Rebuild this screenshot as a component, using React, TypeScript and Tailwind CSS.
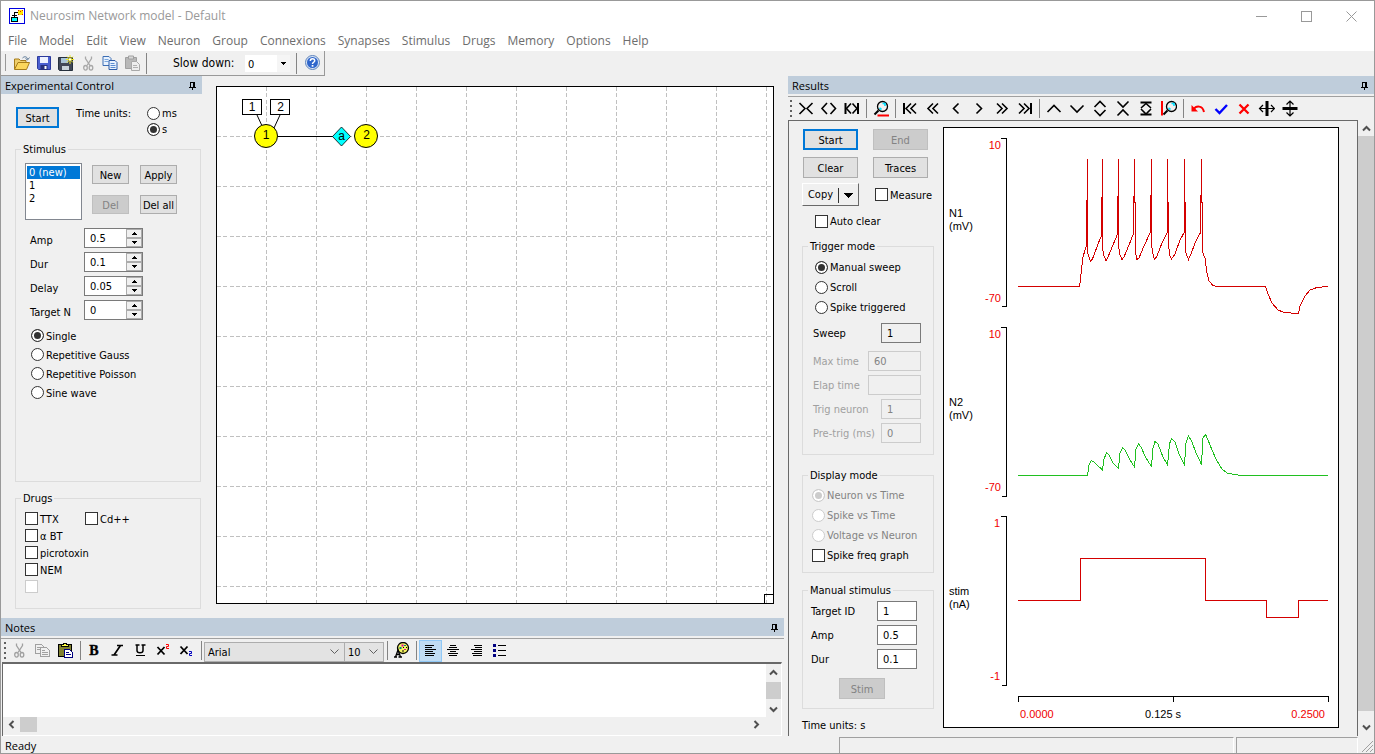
import type { ReactNode } from "react";

const ui = "font-['DejaVu_Sans_Condensed',Tahoma,sans-serif]";

/* ---------- small controls ---------- */

function Radio({ name, label, on, disabled }: { name: string; label: string; on?: boolean; disabled?: boolean }) {
  return (
    <label className={disabled ? "flex items-center gap-[2px] text-[#838383]" : "flex items-center gap-[2px]"}>
      <input
        type="radio"
        name={name}
        defaultChecked={on}
        disabled={disabled}
        className="size-[13px] shrink-0 appearance-none rounded-full border border-[#333] bg-white shadow-[inset_0_0_0_2px_white] checked:bg-[#333] disabled:border-[#ccc] disabled:checked:bg-[#ccc]"
      />
      <span className="pt-[2px] leading-[12px] whitespace-nowrap">{label}</span>
    </label>
  );
}

function Check({ label, disabled }: { label: string; disabled?: boolean }) {
  return (
    <label className="flex items-center gap-[2px]">
      <input
        type="checkbox"
        disabled={disabled}
        aria-label={label || "Unassigned drug"}
        className="size-[13px] shrink-0 appearance-none border border-[#333] bg-white checked:bg-[#333] disabled:border-[#ccc]"
      />
      <span className="pt-[2px] leading-[12px] whitespace-nowrap">{label}</span>
    </label>
  );
}

function Btn({ children, primary, disabled }: { children: ReactNode; primary?: boolean; disabled?: boolean }) {
  const look = primary
    ? "border-2 border-[#0078d7] bg-[#e1e1e1]"
    : disabled
      ? "border border-[#bfbfbf] bg-[#ccc] text-[#838383]"
      : "border border-[#adadad] bg-[#e1e1e1]";
  return (
    <button type="button" disabled={disabled} className={`flex h-full w-full items-center justify-center pt-[2px] leading-[12px] whitespace-nowrap ${look}`}>
      {children}
    </button>
  );
}

function Group({ title, className, children }: { title: string; className?: string; children: ReactNode }) {
  return (
    <fieldset className={`min-w-0 border border-[#dcdcdc] ${className ?? ""}`}>
      <legend className="ml-[5px] h-[14px] px-[2px] leading-[16px]">{title}</legend>
      {children}
    </fieldset>
  );
}

function Spin({ id, label, value }: { id: string; label: string; value: string }) {
  return (
    <div className="flex h-5">
      <label htmlFor={id} className="w-[54px] pt-[6px] leading-[14px]">{label}</label>
      <div className="flex w-[59px] border border-[#7a7a7a] bg-white">
        <input id={id} defaultValue={value} className="w-[41px] min-w-0 bg-transparent pt-[2px] pl-[5px] outline-none" />
        <div className="flex flex-1 flex-col bg-[#f0f0f0]">
          <button type="button" aria-label={`${label} up`} className="flex flex-1 items-center justify-center border border-[#acacac]">
            <svg width="5" height="3" shapeRendering="crispEdges"><path d="M2 0h1v1h1v1h1v1H0V2h1V1h1z" /></svg>
          </button>
          <button type="button" aria-label={`${label} down`} className="flex flex-1 items-center justify-center border border-[#acacac]">
            <svg width="5" height="3" shapeRendering="crispEdges"><path d="M0 0h5v1H4v1H3v1H2V2H1V1H0z" /></svg>
          </button>
        </div>
      </div>
    </div>
  );
}

function Field({ id, label, value, disabled, readOnly, wide }: { id: string; label: string; value: string; disabled?: boolean; readOnly?: boolean; wide?: boolean }) {
  const box = disabled ? "border-[#ccc] bg-[#f0f0f0] text-[#838383]" : readOnly ? "border-[#7a7a7a] bg-[#f0f0f0]" : "border-[#7a7a7a] bg-white";
  return (
    <div className="flex h-5 items-center justify-between">
      <label htmlFor={id} className={disabled ? "pt-[2px] leading-[14px] whitespace-nowrap text-[#a0a0a0]" : "pt-[2px] leading-[14px] whitespace-nowrap"}>{label}</label>
      <input
        id={id}
        defaultValue={value}
        disabled={disabled}
        readOnly={readOnly}
        className={`h-5 border pt-px pl-[5px] outline-none ${wide ? "w-[53px]" : "w-[40px]"} ${box}`}
      />
    </div>
  );
}

/* ---------- tool bars ---------- */

function Tool({ label, children, active }: { label: string; children: ReactNode; active?: boolean }) {
  return (
    <button
      type="button"
      aria-label={label}
      className={active ? "flex h-[22px] w-[23px] items-center justify-center border border-[#90c8f6] bg-[#c0dcf3]" : "flex h-[22px] w-[23px] items-center justify-center"}
    >
      <svg width="17" height="17" viewBox="0 0 17 17" fill="none" stroke="black" strokeWidth="1.6" className="shrink-0">{children}</svg>
    </button>
  );
}

function Sep() {
  return (
    <div className="flex w-[6px] justify-center self-stretch py-[2px]">
      <div className="w-px bg-[#848484]" />
    </div>
  );
}

function Grip() {
  return (
    <svg width="6" height="20" shapeRendering="crispEdges" className="shrink-0">
      <path d="M2 1h2v2H2zM2 6h2v2H2zM2 11h2v2H2zM2 16h2v2H2z" fill="#606060" />
    </svg>
  );
}

function Pin() {
  return (
    <svg width="7" height="8" viewBox="0 0 7 8" shapeRendering="crispEdges" aria-hidden="true">
      <path d="M1 0h5v5h1v1H4v2H3V6H0V5h1zM2 1v4h2V1z" fillRule="evenodd" />
    </svg>
  );
}

function PaneHeader({ title }: { title: string }) {
  return (
    <h2 className="flex h-[18px] items-center justify-between bg-[#bfcddb] pt-[2px] pr-[6px] pl-[4px] font-['Open_Sans',sans-serif] text-[11px] leading-[16px]">
      {title}
      <Pin />
    </h2>
  );
}

function Scissors({ color }: { color: string }) {
  return (
    <g stroke={color} strokeWidth="1.3" fill="none">
      <path d="M5.5 1.5v2l4.5 7M11.5 1.5v2l-4.5 7" />
      <ellipse cx="5.5" cy="12.8" rx="1.8" ry="2.3" />
      <ellipse cx="11" cy="12.8" rx="1.8" ry="2.3" />
    </g>
  );
}

function Chev({ d, label }: { d: string; label: string }) {
  return (
    <button type="button" aria-label={label} className="flex size-4 items-center justify-center">
      <svg width="9" height="9" viewBox="0 0 9 9" fill="none" stroke="#505050" strokeWidth="2"><path d={d} /></svg>
    </button>
  );
}

const UP = "M1 6.5 4.5 3 8 6.5";
const DOWN = "M1 2.5 4.5 6 8 2.5";
const LEFT = "M6.5 1 3 4.5 6.5 8";
const RIGHT = "M2.5 1 6 4.5 2.5 8";

/* ---------- window chrome ---------- */

function TitleBar() {
  return (
    <header className="flex h-[30px] items-center bg-white pl-[8px] text-[#999]">
      <svg width="16" height="16" viewBox="0 0 16 16" shapeRendering="crispEdges">
        <rect x=".5" y=".5" width="15" height="15" fill="white" stroke="#0000e0" />
        <path d="M9 2h5v5H9z" fill="#ffe800" />
        <path d="M9 2h1v1H9zM13 2h1v1h-1zM9 6h1v1H9zM13 6h1v1h-1zM11 3h1v1h-1z" fill="#e02000" />
        <path d="M9 4.500H5.500v4M3 7.500h5" stroke="black" fill="none" />
        <path d="M2 9h7v5H2z" fill="black" />
        <path d="M3 10h5v3H3z" fill="#00ffff" />
      </svg>
      <h1 className="flex-1 pl-[5px] text-[12px]">Neurosim Network model - Default</h1>
      <div className="flex text-[#999]">
        <button type="button" aria-label="Minimize" className="flex h-[30px] w-[45px] items-center justify-center">
          <svg width="11" height="11" shapeRendering="crispEdges"><path d="M0 5.5h11" stroke="#999" /></svg>
        </button>
        <button type="button" aria-label="Maximize" className="flex h-[30px] w-[45px] items-center justify-center">
          <svg width="11" height="11" shapeRendering="crispEdges"><path d="M.5.5h10v10H.5z" fill="none" stroke="#999" /></svg>
        </button>
        <button type="button" aria-label="Close" className="flex h-[30px] w-[45px] items-center justify-center">
          <svg width="11" height="11"><path d="M.5.5l10 10M10.5.5l-10 10" stroke="#999" /></svg>
        </button>
      </div>
    </header>
  );
}

const menus = ["File", "Model", "Edit", "View", "Neuron", "Group", "Connexions", "Synapses", "Stimulus", "Drugs", "Memory", "Options", "Help"];

function MenuBar() {
  return (
    <nav className="flex h-[20px] items-center gap-[12px] bg-white pl-[7px] text-[12px] text-[#6d6d6d]">
      {menus.map((m) => (
        <button key={m} type="button">{m}</button>
      ))}
    </nav>
  );
}

function FileTool({ label, children }: { label: string; children: ReactNode }) {
  return (
    <button type="button" aria-label={label} className="flex w-[22px] items-center justify-center">
      <svg width="16" height="16" viewBox="0 0 16 16">{children}</svg>
    </button>
  );
}

function MainToolBar() {
  return (
    <div className={`flex h-[25px] w-[324px] items-stretch border-r border-b border-[#999] pb-px ${ui} text-[12px]`}>
      <div className="my-[3px] ml-[4px] w-px bg-[#999]" />
      <div className="ml-[5px] flex">
        <FileTool label="Open">
          <path d="M.5 14V4h4.500l1.500 1.500H12V8" fill="#f0cf6c" stroke="#a67c1b" />
          <path d="M.5 14.500 4 7.500h11.500L12.500 14.500z" fill="#fbd65c" stroke="#a67c1b" />
          <path d="M8.500 3c2-2 4.500-1.500 5 1M15.500 2.500 13.500 5 11.500 3.500" fill="none" stroke="#5b7796" />
        </FileTool>
        <FileTool label="Save">
          <path d="M1.500 1.500h13v13h-12l-1-1z" fill="#4a5fd0" stroke="#2c3a9c" />
          <path d="M4 2h8v6H4z" fill="#eef2ff" />
          <path d="M4.500 10h7v5h-7z" fill="#27307c" />
          <path d="M8.500 11h2v3h-2z" fill="white" />
        </FileTool>
        <FileTool label="Save as">
          <path d="M.5 2.500h14v13h-13l-1-1z" fill="#404858" stroke="#26303c" />
          <path d="M3 3h7v5H3z" fill="#a8c4d8" />
          <path d="M4 11h7v4H4z" fill="#c8d4dc" />
          <path d="M12 0v9M8 4.500h8M9 1.500l6 6M15 1.500l-6 6" stroke="#f2ea20" />
          <path d="M11 3.500h2v2h-2z" fill="white" />
        </FileTool>
        <FileTool label="Cut"><Scissors color="#a8a8a8" /></FileTool>
        <FileTool label="Copy">
          <path d="M1 1.500h6l2 2v7H1z" fill="#e8f2ff" stroke="#3c6eb4" />
          <path d="M2.500 4.500h4M2.500 6.500h4" stroke="#7aa6dc" />
          <path d="M7 5.500h6l2 2v7H7z" fill="#e8f2ff" stroke="#2d5ca8" />
          <path d="M8.500 8.500h4M8.500 10.500h5M8.500 12.500h5" stroke="#5b8cd0" />
        </FileTool>
        <FileTool label="Paste">
          <path d="M1.500 2.500h11v11h-11z" fill="#b8b8b8" stroke="#a0a0a0" />
          <path d="M4.500 1h5v3h-5z" fill="#d8d8d8" stroke="#a0a0a0" />
          <path d="M7.500 6.500h5l3 3v6h-8z" fill="#ededed" stroke="#a8a8a8" />
          <path d="M9 10.500h4M9 12.500h5" stroke="#b0b0b0" />
        </FileTool>
      </div>
      <div className="mt-[2px] ml-[3px] w-px bg-[#848484]" />
      <label htmlFor="slow" className="ml-[26px] self-center pt-px">Slow down:</label>
      <div className="mt-[4px] ml-auto flex h-[17px] w-[45px] items-center bg-white">
        <select id="slow" defaultValue="0" className="h-full flex-1 appearance-none bg-transparent pt-[2px] pl-[3px] text-[11px] outline-none">
          <option>0</option>
        </select>
        <div className="flex h-full w-[13px] items-center justify-center bg-[#f5f5f5]">
          <svg width="5" height="3" shapeRendering="crispEdges"><path d="M0 0h5v1H4v1H3v1H2V2H1V1H0z" /></svg>
        </div>
      </div>
      <div className="mt-[2px] ml-[6px] w-px bg-[#848484]" />
      <button type="button" aria-label="Help" className="mr-[4px] ml-[8px] flex items-center">
        <svg width="15" height="15" viewBox="0 0 15 15">
          <circle cx="7.500" cy="7.500" r="7" fill="#d8e4f4" stroke="#5f84bc" />
          <circle cx="7.500" cy="7.500" r="5.500" fill="#2f66cc" />
          <path d="M5.300 6C5.300 3 9.700 3 9.700 5.700 9.700 7.300 7.500 7.200 7.500 9" stroke="white" strokeWidth="1.500" fill="none" />
          <path d="M6.700 10h1.700v1.700H6.700z" fill="white" />
        </svg>
      </button>
    </div>
  );
}

/* ---------- experimental control ---------- */

function ExperimentalControl() {
  return (
    <aside className="flex w-[201px] shrink-0 flex-col">
      <PaneHeader title="Experimental Control" />
      <div className="flex flex-1 flex-col pt-[11px] pr-px pl-[14px]">
        <div className="flex h-8 items-start pl-px">
          <div className="mt-[2px] h-[21px] w-[43px]"><Btn primary>Start</Btn></div>
          <span className="w-[71px] pl-[17px] leading-[18px] whitespace-nowrap">Time units:</span>
          <div className="grid flex-1 auto-rows-[16px] pl-[17px]">
            <Radio name="units" label="ms" />
            <Radio name="units" label="s" on />
          </div>
        </div>
        <Group title="Stimulus" className="mt-[5px] flex-1">
          <div className="flex gap-[10px] pt-[7px] pl-[9px]">
            <select aria-label="Stimulus list" size={4} defaultValue="0" className="h-[57px] w-[57px] appearance-none overflow-hidden border border-[#828790] bg-white px-px pt-[2px] pb-0 leading-[13px] outline-none">
              <option value="0" className="min-h-0 px-[2px] py-0 leading-[13px] checked:bg-[linear-gradient(#0078d7,#0078d7)] checked:text-white">0 (new)</option>
              <option value="1" className="min-h-0 px-[2px] py-0 leading-[13px]">1</option>
              <option value="2" className="min-h-0 px-[2px] py-0 leading-[13px]">2</option>
            </select>
            <div className="grid grid-cols-[37px_37px] grid-rows-[19px_19px] gap-[11px] pt-[2px]">
              <Btn>New</Btn>
              <Btn>Apply</Btn>
              <Btn disabled>Del</Btn>
              <Btn>Del all</Btn>
            </div>
          </div>
          <div className="mt-2 flex flex-col gap-1 pl-[14px]">
            <Spin id="amp" label="Amp" value="0.5" />
            <Spin id="dur" label="Dur" value="0.1" />
            <Spin id="delay" label="Delay" value="0.05" />
            <Spin id="target" label="Target N" value="0" />
          </div>
          <div className="mt-[6px] grid auto-rows-[19px] pl-[15px]">
            <Radio name="kind" label="Single" on />
            <Radio name="kind" label="Repetitive Gauss" />
            <Radio name="kind" label="Repetitive Poisson" />
            <Radio name="kind" label="Sine wave" />
          </div>
        </Group>
        <Group title="Drugs" className="mt-[9px] mb-[9px] h-[118px]">
          <div className="grid auto-rows-[17px] grid-cols-[60px_1fr] pt-[5px] pl-[9px]">
            <Check label="TTX" />
            <Check label="Cd++" />
            <div className="col-span-2 grid"><Check label="α BT" /></div>
            <div className="col-span-2 grid"><Check label="picrotoxin" /></div>
            <div className="col-span-2 grid"><Check label="NEM" /></div>
            <div className="col-span-2 grid"><Check label="" disabled /></div>
          </div>
        </Group>
      </div>
    </aside>
  );
}

/* ---------- network canvas ---------- */

function NetworkCanvas() {
  return (
    <div className="flex flex-1 pt-[10px] pr-[14px] pb-[14px] pl-[14px]">
      <div className="relative flex-1 border border-black bg-white">
        <svg className="absolute inset-0 size-full" fontFamily="'Liberation Sans', Arial, sans-serif" fontSize="12" textAnchor="middle">
          <defs>
            <pattern id="grid" width="50" height="50" patternUnits="userSpaceOnUse">
              <path d="M49.500 0v50M0 49.500h50" stroke="#c0c0c0" strokeDasharray="4 2.250" fill="none" shapeRendering="crispEdges" />
            </pattern>
          </defs>
          <rect width="100%" height="100%" fill="url(#grid)" />
          <path d="M40 28l6 13M63 28l-6 13" stroke="black" />
          <path d="M61 49.500h56" stroke="black" shapeRendering="crispEdges" />
          <path d="M25.500 12.500h19v15h-19zM53.500 12.500h19v15h-19z" fill="white" stroke="black" shapeRendering="crispEdges" />
          <text x="35" y="24">1</text>
          <text x="63.500" y="24">2</text>
          <circle cx="49" cy="49" r="11.500" fill="#ffff00" stroke="black" />
          <circle cx="149" cy="49" r="11.500" fill="#ffff00" stroke="black" />
          <path d="M124.500 40l9 9.500-9 9.500-9-9.500z" fill="#00ffff" stroke="black" strokeWidth=".8" />
          <text x="49" y="52">1</text>
          <text x="149.500" y="52">2</text>
          <text x="124.500" y="52.500">a</text>
        </svg>
        <div className="absolute right-0 bottom-0 size-[9px] border-t border-l border-black" />
      </div>
    </div>
  );
}

/* ---------- notes ---------- */

function Combo({ label, value, className }: { label: string; value: string; className: string }) {
  return (
    <div className={`flex h-[20px] items-center self-end border border-[#adadad] bg-[#e3e3e3] pr-[5px] ${className}`}>
      <select aria-label={label} defaultValue={value} className={`min-w-0 flex-1 appearance-none bg-transparent pt-[2px] pl-[3px] outline-none ${ui}`}>
        <option>{value}</option>
      </select>
      <svg width="9" height="6" viewBox="0 0 9 6" fill="none" stroke="#606060"><path d="M.5.500l4 4 4-4" /></svg>
    </div>
  );
}

function Notes() {
  return (
    <section className="flex h-[118px] shrink-0 flex-col pr-[4px]">
      <PaneHeader title="Notes" />
      <div className="mt-[2px] flex h-[24px] items-center border-t border-[#a0a0a0] pl-px">
        <Grip />
        <Tool label="Cut"><Scissors color="#a0a0a0" /></Tool>
        <Tool label="Copy">
          <g stroke="#a0a0a0" strokeWidth="1" shapeRendering="crispEdges">
            <path d="M1.500 2.500h6l3 3v6h-9zM3 5.500h3M3 7.500h3" fill="#f0f0f0" />
            <path d="M6.500 5.500h6l3 3v6h-9zM8 8.500h3M8 10.500h6M8 12.500h6" fill="#f0f0f0" />
          </g>
        </Tool>
        <Tool label="Paste">
          <g strokeWidth="1" shapeRendering="crispEdges">
            <path d="M1.500 2.500h13v12h-13z" fill="#808030" stroke="black" />
            <path d="M4.500 4.500h7v-2h-2v-1h-3v1h-2z" fill="#ffff40" stroke="black" />
            <path d="M7.500 7.500h5l3 3v5h-8z" fill="white" stroke="#000080" />
            <path d="M9 10.500h3M9 12.500h5" stroke="#000080" />
          </g>
        </Tool>
        <Sep />
        <Tool label="Bold"><text x="8" y="13" textAnchor="middle" fontFamily="'Liberation Serif', serif" fontWeight="bold" fontSize="14" fill="black" stroke="black" strokeWidth=".4">B</text></Tool>
        <Tool label="Italic"><path d="M8 3.500h6M2.500 13h6M11.500 3.500 5 13" strokeWidth="1.700" /></Tool>
        <Tool label="Underline">
          <path d="M3.500 3h4M9.500 3h4M5 3v5.500c0 3 6 3 6 0V3" strokeWidth="1.500" />
          <path d="M4 13.500h9" strokeWidth="1" />
        </Tool>
        <Tool label="Superscript">
          <path d="M2.500 5l7 7.500M9.500 5l-7 7.500" strokeWidth="1.800" />
          <path d="M11 2.500h2.500v2H11.500v2H14" stroke="red" strokeWidth="1" />
        </Tool>
        <Tool label="Subscript">
          <path d="M2.500 4.500l7 7.500M9.500 4.500l-7 7.500" strokeWidth="1.800" />
          <path d="M11 9.500h2.500v2H11.500v2H14" stroke="#0000c0" strokeWidth="1" />
        </Tool>
        <Sep />
        <Combo label="Font" value="Arial" className="w-[141px]" />
        <Combo label="Size" value="10" className="-ml-px w-[40px]" />
        <Sep />
        <Tool label="Text colour">
          <circle cx="10" cy="6" r="5.500" fill="#f4f260" stroke="black" strokeWidth="1.300" />
          <path d="M6.500 5h2v2h-2zM11 3h2v1h-2z" fill="#008080" stroke="none" />
          <path d="M8.500 2.500h2v2h-2zM11 7h2v1h-2z" fill="#e000a0" stroke="none" />
          <path d="M13 5h1v1h-1zM10 5h1v1h-1zM9 8.500h2v1H9z" fill="black" stroke="none" />
          <path d="M1 15h3M5.500 15H9M2.500 15l2.500-7 2.500 7M3.500 12.500h3" strokeWidth="1.300" />
        </Tool>
        <Sep />
        <Tool label="Align left" active><path d="M3 3.500h9M3 5.500h7M3 7.500h11M3 9.500h8M3 11.500h10M3 13.500h9" strokeWidth="1" shapeRendering="crispEdges" /></Tool>
        <Tool label="Align centre"><path d="M5 3.500h6M4 5.500h8M2 7.500h12M5 9.500h6M3 11.500h10M4 13.500h8" strokeWidth="1" shapeRendering="crispEdges" /></Tool>
        <Tool label="Align right"><path d="M6 3.500h8M7 5.500h7M3 7.500h11M6 9.500h8M4 11.500h10M5 13.500h9" strokeWidth="1" shapeRendering="crispEdges" /></Tool>
        <Tool label="Bullets">
          <path d="M2 2h3v3H2zM2 7h3v3H2zM2 12h3v3H2z" fill="#000080" stroke="none" shapeRendering="crispEdges" />
          <path d="M7 3.500h8M7 8.500h8M7 13.500h8" strokeWidth="1" shapeRendering="crispEdges" />
        </Tool>
      </div>
      <div className="mr-[2px] ml-px flex min-h-0 flex-1 flex-col border-t-2 border-r border-l border-t-[#696969] border-r-white border-l-[#696969]">
        <div className="flex min-h-0 flex-1">
          <textarea aria-label="Notes text" className="min-w-0 flex-1 resize-none bg-white outline-none" />
          <div className="flex w-[15px] flex-col items-center justify-between">
            <Chev d={UP} label="Scroll notes up" />
            <div className="h-[17px] w-full bg-[#cdcdcd]" />
            <Chev d={DOWN} label="Scroll notes down" />
          </div>
        </div>
        <div className="flex h-[15px] items-center pr-[17px]">
          <Chev d={LEFT} label="Scroll notes left" />
          <div className="ml-px h-full w-[17px] bg-[#cdcdcd]" />
          <div className="flex-1" />
          <Chev d={RIGHT} label="Scroll notes right" />
        </div>
        <div className="h-[4px] border-b border-white" />
      </div>
    </section>
  );
}

/* ---------- results ---------- */

function ResultsToolBar() {
  return (
    <div className="mt-[2px] flex h-[24px] items-center border-t border-[#a0a0a0]">
      <Grip />
      <Tool label="Compress time"><path d="M2.500 3 8 8.500 2.500 14M15.500 3 10 8.500l5.500 5.500" /></Tool>
      <Tool label="Expand time"><path d="M7 3 2 8.500 7 14M10.500 3l5 5.500-5 5.500" /></Tool>
      <Tool label="Fit time"><path d="M2.500 3v11M15 3v11" strokeWidth="2" /><path d="M8 3.500 3.500 8.500 8 13.500M9.500 3.500l4.500 5-4.500 5" /></Tool>
      <Sep />
      <Tool label="Zoom time">
        <circle cx="10.500" cy="6.500" r="5" strokeWidth="1.300" />
        <path d="M10.500 3.500H13V6M7.500 8l2 1.500" stroke="#00e0ff" />
        <path d="M6.500 10.500l-4 4" strokeWidth="2" />
        <path d="M5.500 15.500H17" stroke="red" strokeWidth="2" />
      </Tool>
      <Sep />
      <Tool label="First"><path d="M3 3v11" strokeWidth="2" /><path d="M10 3.500l-5 5 5 5M15 3.500l-5 5 5 5" /></Tool>
      <Tool label="Page back"><path d="M9 3.500l-5 5 5 5M14 3.500l-5 5 5 5" /></Tool>
      <Tool label="Back"><path d="M11.500 3.500l-5 5 5 5" /></Tool>
      <Tool label="Forward"><path d="M6.500 3.500l5 5-5 5" /></Tool>
      <Tool label="Page forward"><path d="M4 3.500l5 5-5 5M9 3.500l5 5-5 5" /></Tool>
      <Tool label="Last"><path d="M15 3v11" strokeWidth="2" /><path d="M3 3.500l5 5-5 5M8 3.500l5 5-5 5" /></Tool>
      <Sep />
      <Tool label="Shift up"><path d="M2.500 12 9 5.500l6.500 6.500" /></Tool>
      <Tool label="Shift down"><path d="M2.500 5.500 9 12l6.500-6.500" /></Tool>
      <Tool label="Expand scale"><path d="M3.500 7 9 1.500 14.500 7M3.500 10 9 15.500l5.500-5.500" /></Tool>
      <Tool label="Compress scale"><path d="M3.500 1.500 9 7l5.500-5.500M3.500 15.500 9 10l5.500 5.500" /></Tool>
      <Tool label="Fit scale"><path d="M3.500 2.500h11M3.500 14.500h11" strokeWidth="2" /><path d="M4 8l5-4.500L14 8M4 9l5 5 5-5" /></Tool>
      <Tool label="Zoom scale">
        <circle cx="11.500" cy="6.500" r="5" strokeWidth="1.300" />
        <path d="M11.500 3.500H14V6M8.500 8l2 1.500" stroke="#00e0ff" />
        <path d="M7.500 10.500l-4 4" strokeWidth="2" />
        <path d="M2 1v14.500" stroke="red" strokeWidth="2" />
      </Tool>
      <Sep />
      <Tool label="Undo"><path d="M2.500 5v6.500H9z" fill="red" stroke="none" /><path d="M4.500 9.500C7 5.500 13.500 5 15 12" stroke="red" strokeWidth="2" /></Tool>
      <Tool label="Accept"><path d="M3.500 9l4 4L15 5" stroke="#0000ff" strokeWidth="2.400" /></Tool>
      <Tool label="Cancel"><path d="M4.500 4.500l9 9M13.500 4.500l-9 9" stroke="red" strokeWidth="2.300" /></Tool>
      <Tool label="Split horizontally"><path d="M9 1v15" strokeWidth="3" /><path d="M1.500 8.500h15M5 5 1.500 8.500 5 12M13 5l3.500 3.500L13 12" strokeWidth="1.200" /></Tool>
      <Tool label="Split vertically"><path d="M1.500 8.500h15" strokeWidth="3" /><path d="M9 1v15M5.500 4.500 9 1l3.500 3.500M5.500 12.500 9 16l3.500-3.500" strokeWidth="1.200" /></Tool>
    </div>
  );
}

const n1Trace =
  "M1018 286.500H1079.500L1080.500 280 1081.500 269 1083 257 1086.500 245V200H1087.500V159V253L1089 257 1090.500 261.500 1092.500 259 1098 244 1101.500 235.500V197H1102.500V159V248L1104 256 1106 260.500 1108 257 1113 245 1117.500 234V196H1118.500V159V246L1120 255 1122 259.500 1124 257 1129 245 1133.500 233.500V196H1134.500V202H1135.500V253L1137 259.500 1139 258 1144 246 1150.500 232V195H1151.500V159V245L1153 254 1154.500 259.500 1157 256 1162 243 1167.500 232V159V202H1168.500V246L1170 256 1171.500 259 1175 254 1180 240 1184.500 232V159V202H1185.500V252L1188.500 259.500 1191 254 1195 243 1200.500 232.500V195H1201.500V159V202H1202.500V252L1205 258 1207 273 1209 281 1213 285.500 1217 286.500H1265.500L1268 294 1272 303 1278 310 1284 312.500 1298.500 313.500 1300 306 1305 296 1310 290 1317 287.500 1328 286.500M1134.500 202V159";

const n2Trace =
  "M1018 475.500H1087.500L1089 465 1091.500 460.500 1094 462 1102.500 470 1104 459 1106.500 453 1109 455 1113 463 1118.500 468.500 1120 453 1122.500 448 1125 450 1130 460 1134.500 467 1136 449 1138.500 444 1141 447 1146 458 1151.500 466.500 1153 448 1155 441.500 1158 444 1163 457 1167.500 465 1169.500 444 1171.500 438.500 1175 442 1179 454 1184.500 464.500 1186 443 1188.500 436 1192 442 1196 453 1201.500 464.500 1203 438 1205.500 434.500 1208 440 1212 450 1217 461 1222 469 1227 473 1234 474.500 1242 475.500H1328";

function Plot() {
  return (
    <div className="min-w-0 flex-1 self-start border border-black bg-white">
      <svg viewBox="944 128 394 599" className="block w-full" fontFamily="'Liberation Sans', Arial, sans-serif" fontSize="11">
        <g fill="none" stroke="black" shapeRendering="crispEdges">
          <path d="M1001 138.500h5.500v168H1002M1001 327.500h5.500v169H1002M1001 516.500h5.500v169H1002" />
          <path d="M1018.500 702v-5.500h310v5.500M1173.500 697v5" />
        </g>
        <g fill="none" shapeRendering="crispEdges" strokeWidth="1">
          <path d={n1Trace} stroke="#d40000" />
          <path d={n2Trace} stroke="#20c020" />
          <path d="M1018 600.500h62.500v-42h125v42h61v17h32v-17H1328" stroke="#d40000" />
        </g>
        <g>
          <text x="949" y="217">N1</text>
          <text x="949" y="230">(mV)</text>
          <text x="949" y="406">N2</text>
          <text x="949" y="419">(mV)</text>
          <text x="949" y="595">stim</text>
          <text x="949" y="608">(nA)</text>
          <text x="1145" y="718">0.125 s</text>
        </g>
        <g fill="#f00000">
          <g textAnchor="end">
            <text x="1001" y="149">10</text>
            <text x="1001" y="302">-70</text>
            <text x="1001" y="338">10</text>
            <text x="1001" y="491">-70</text>
            <text x="1000" y="527">1</text>
            <text x="1000" y="680">-1</text>
            <text x="1325" y="718">0.2500</text>
          </g>
          <text x="1020" y="718">0.0000</text>
        </g>
      </svg>
    </div>
  );
}

function Results() {
  return (
    <section className="flex w-[586px] shrink-0 flex-col">
      <PaneHeader title="Results" />
      <ResultsToolBar />
      <div className="flex flex-1">
        <div className="flex flex-1 gap-[9px] border-x border-t border-[#696969] pr-[18px] pl-[13px]">
          <div className="w-[132px] shrink-0 pt-[8px]">
            <div className="grid grid-cols-[55px_55px] grid-rows-[21px_21px] gap-x-[15px] gap-y-[7px] pl-px">
              <Btn primary>Start</Btn>
              <Btn disabled>End</Btn>
              <Btn>Clear</Btn>
              <Btn>Traces</Btn>
            </div>
            <div className="mt-[5px] flex h-[23px] items-center gap-[16px]">
              <button type="button" className="flex h-full w-[57px] items-center justify-center gap-[5px] border border-t-white border-r-[#696969] border-b-[#696969] border-l-white pt-px">
                <span className="pt-px">Copy</span>
                <span className="h-[15px] w-px bg-[#333]" />
                <svg width="9" height="5" shapeRendering="crispEdges"><path d="M0 0h9v1H8v1H7v1H6v1H5v1H4V4H3V3H2V2H1V1H0z" /></svg>
              </button>
              <Check label="Measure" />
            </div>
            <div className="mt-[8px] grid h-[14px] pl-[13px]"><Check label="Auto clear" /></div>
            <Group title="Trigger mode" className="mt-[11px] pr-[12px] pb-[11px]">
              <div className="grid auto-rows-[20px] pt-[4px] pl-[12px]">
                <Radio name="trigger" label="Manual sweep" on />
                <Radio name="trigger" label="Scroll" />
                <Radio name="trigger" label="Spike triggered" />
              </div>
              <div className="flex flex-col gap-1 pt-[6px] pl-[10px]">
                <div className="mb-1"><Field id="sweep" label="Sweep" value="1" readOnly /></div>
                <Field id="maxtime" label="Max time" value="60" disabled wide />
                <Field id="elap" label="Elap time" value="" disabled wide />
                <Field id="trign" label="Trig neuron" value="1" disabled />
                <Field id="pretrig" label="Pre-trig (ms)" value="0" disabled />
              </div>
            </Group>
            <Group title="Display mode" className="mt-[13px] pb-[7px]">
              <div className="grid auto-rows-[20px] pt-[3px] pl-[9px]">
                <Radio name="display" label="Neuron vs Time" on disabled />
                <Radio name="display" label="Spike vs Time" disabled />
                <Radio name="display" label="Voltage vs Neuron" disabled />
                <Check label="Spike freq graph" />
              </div>
            </Group>
            <Group title="Manual stimulus" className="mt-[10px] pb-[9px]">
              <div className="flex flex-col gap-1 pt-[4px] pr-[16px] pl-[8px]">
                <Field id="mtarget" label="Target ID" value="1" />
                <Field id="mamp" label="Amp" value="0.5" />
                <Field id="mdur" label="Dur" value="0.1" />
              </div>
              <div className="mt-[9px] ml-[36px] h-[21px] w-[46px]"><Btn disabled>Stim</Btn></div>
            </Group>
            <p className="mt-[10px] leading-[14px]">Time units: s</p>
          </div>
          <div className="flex min-w-0 flex-1 pt-[6px]"><Plot /></div>
        </div>
        <div className="flex w-4 flex-col">
          <Chev d={UP} label="Scroll results up" />
          <div className="flex-1 bg-[#cdcdcd]" />
          <div className="flex h-[25px] items-end pb-px"><Chev d={DOWN} label="Scroll results down" /></div>
        </div>
      </div>
    </section>
  );
}

function StatusBar() {
  return (
    <footer className="flex h-[17px] items-end pl-[4px] font-['Open_Sans',sans-serif] text-[11px]">
      <span className="flex-1 leading-[14px]">Ready</span>
      <div className="h-4 w-[395px] border-t border-r border-l border-t-[#a0a0a0] border-r-white border-l-[#a0a0a0]" />
      <div className="ml-[2px] h-4 w-[122px] border-t border-r border-l border-t-[#a0a0a0] border-r-white border-l-[#a0a0a0]" />
      <svg width="16" height="16" viewBox="0 0 16 16" stroke="#a0a0a0"><path d="M4 15 15 4M8 15l7-7M12 15l3-3" /></svg>
    </footer>
  );
}

export default function App() {
  return (
    <div className="flex min-h-screen min-w-[1100px] flex-col border border-[#999] bg-[#f0f0f0] font-['Open_Sans',sans-serif] text-black">
      <TitleBar />
      <MenuBar />
      <MainToolBar />
      <main className={`flex flex-1 text-[11px] ${ui}`}>
        <div className="flex min-w-0 flex-1 flex-col">
          <div className="flex flex-1">
            <ExperimentalControl />
            <NetworkCanvas />
          </div>
          <Notes />
        </div>
        <Results />
      </main>
      <StatusBar />
    </div>
  );
}
